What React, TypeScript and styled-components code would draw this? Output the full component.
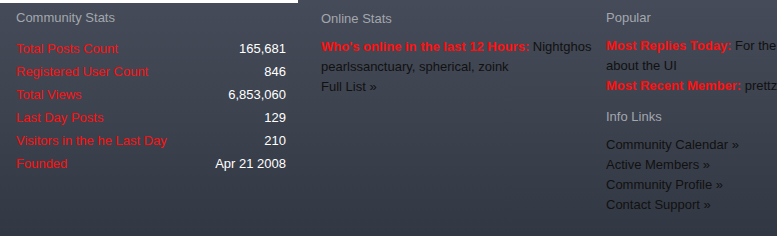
import React from "react";
import styled, { createGlobalStyle } from "styled-components";

const Global = createGlobalStyle`
  html, body { margin: 0; padding: 0; background: #fff; }
  body { font-family: "Liberation Sans", Arial, sans-serif; font-size: 13px; }
`;

const Panel = styled.div`
  display: flex;
  width: 777px;
  height: 236px;
  overflow: hidden;
  background: linear-gradient(180deg, #454b58 0%, #3d434f 45%, #323843 100%);
`;

const Column = styled.div<{ $width?: number; $gapLeft?: number; $cap?: boolean; $shift?: number }>`
  flex: ${(p) => (p.$width ? `0 0 ${p.$width}px` : "1 1 auto")};
  min-width: 0;
  margin-left: ${(p) => p.$gapLeft ?? 0}px;
  padding-top: ${(p) => 10 - (p.$cap ? 3 : 0) + (p.$shift ?? 0)}px;
  border-top: ${(p) => (p.$cap ? "3px solid #fff" : "none")};
  overflow: hidden;
  box-sizing: border-box;
`;

const LeftColumn = styled(Column)`
  padding-left: 16px;
  padding-right: 12px;
`;

const Heading = styled.div<{ $space?: number }>`
  color: #a3a7ae;
  font-size: 13px;
  line-height: 15px;
  margin-bottom: ${(p) => p.$space ?? 12}px;
  white-space: nowrap;
`;

const StatRow = styled.div`
  display: flex;
  justify-content: space-between;
  line-height: 23px;
  white-space: nowrap;
`;

const StatLabel = styled.span`
  color: #ff1010;
`;

const StatValue = styled.span`
  color: #ffffff;
`;

const Line = styled.div`
  line-height: 20px;
  color: #111111;
  white-space: nowrap;
  overflow: hidden;
`;

const Strong = styled.b`
  color: #ff1010;
  font-weight: bold;
`;

const Group = styled.div<{ $space?: number }>`
  margin-bottom: ${(p) => p.$space ?? 0}px;
`;

const stats: [string, string][] = [
  ["Total Posts Count", "165,681"],
  ["Registered User Count", "846"],
  ["Total Views", "6,853,060"],
  ["Last Day Posts", "129"],
  ["Visitors in the he Last Day", "210"],
  ["Founded", "Apr 21 2008"],
];

const links = ["Community Calendar »", "Active Members »", "Community Profile »", "Contact Support »"];

export default function App() {
  return (
    <>
      <Global />
      <Panel>
        <LeftColumn $width={298} $cap>
          <Heading>Community Stats</Heading>
          {stats.map(([k, v]) => (
            <StatRow key={k}>
              <StatLabel>{k}</StatLabel>
              <StatValue>{v}</StatValue>
            </StatRow>
          ))}
        </LeftColumn>
        <Column $width={272} $gapLeft={23} $shift={1}>
          <Heading $space={11}>Online Stats</Heading>
          <Line>
            <Strong>Who's online in the last 12 Hours:</Strong> Nightghos
          </Line>
          <Line>pearlssanctuary, spherical, zoink</Line>
          <Line>Full List »</Line>
        </Column>
        <Column $gapLeft={13}>
          <Heading $space={11}>Popular</Heading>
          <Group $space={13}>
            <Line>
              <Strong>Most Replies Today:</Strong> For the
            </Line>
            <Line>about the UI</Line>
            <Line>
              <Strong>Most Recent Member:</Strong> prettz
            </Line>
          </Group>
          <Heading $space={11}>Info Links</Heading>
          {links.map((l) => (
            <Line key={l}>{l}</Line>
          ))}
        </Column>
      </Panel>
    </>
  );
}
